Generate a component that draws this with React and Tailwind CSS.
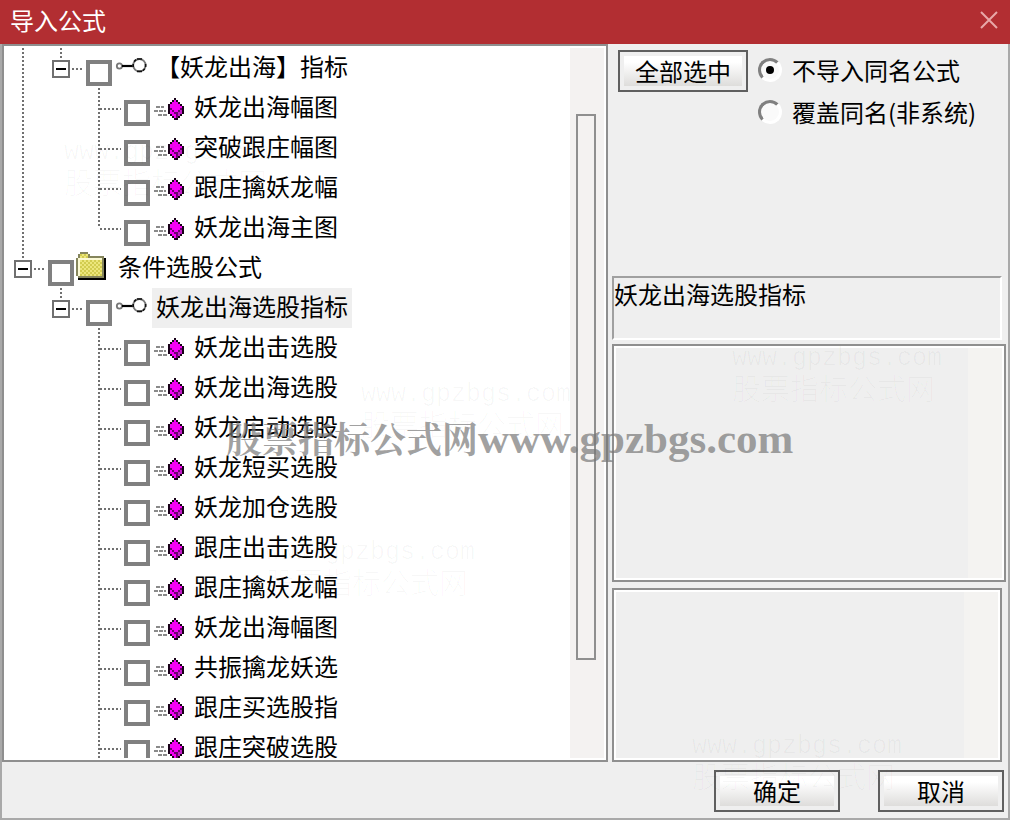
import { useState } from 'react';
import clsx from 'clsx';

const groups = [
  {
    id: 'indicator',
    root: null,
    title: '【妖龙出海】指标',
    items: ['妖龙出海幅图', '突破跟庄幅图', '跟庄擒妖龙幅', '妖龙出海主图'],
  },
  {
    id: 'picker',
    root: '条件选股公式',
    title: '妖龙出海选股指标',
    items: [
      '妖龙出击选股',
      '妖龙出海选股',
      '妖龙启动选股',
      '妖龙短买选股',
      '妖龙加仓选股',
      '跟庄出击选股',
      '跟庄擒妖龙幅',
      '妖龙出海幅图',
      '共振擒龙妖选',
      '跟庄买选股指',
      '跟庄突破选股',
    ],
  },
];

// Dotted guide lines of one tree cell
function Guide({ up, down, right, from = 20 }) {
  return (
    <svg
      width="38"
      height="40"
      className="col-start-1 row-start-1 overflow-visible"
      fill="none"
      stroke="#707070"
      strokeWidth="2"
      strokeDasharray="2 2"
      shapeRendering="crispEdges"
      aria-hidden="true"
    >
      {up && <path d="M19 0V20" />}
      {down && <path d="M19 20V40" />}
      {right && <path d={`M${from} 21H41`} />}
    </svg>
  );
}

function Cell({ children }) {
  return <div className="grid h-10 w-[38px] shrink-0">{children}</div>;
}

function Expander({ open, onClick, label }) {
  return (
    <button
      type="button"
      aria-label={label}
      aria-expanded={open}
      onClick={onClick}
      className="z-10 col-start-1 row-start-1 mt-3 ml-2.5 flex size-[18px] items-center justify-center border-2 border-[#707070] bg-white"
    >
      <svg width="10" height="10" stroke="#000" strokeWidth="2" shapeRendering="crispEdges">
        <path d="M0 5H10" />
        {!open && <path d="M5 0V10" />}
      </svg>
    </button>
  );
}

function FolderIcon() {
  return (
    <svg width="40" height="40" viewBox="0 0 20 20" shapeRendering="crispEdges" aria-hidden="true">
      <defs>
        <pattern id="check" width="2" height="2" patternUnits="userSpaceOnUse">
          <rect width="2" height="2" fill="#ece67c" />
          <rect width="1" height="1" fill="#d2cc50" />
          <rect x="1" y="1" width="1" height="1" fill="#d2cc50" />
        </pattern>
      </defs>
      <path d="M3 14H15V5H16V16H2V15Z" fill="#000" />
      <path d="M1 5H2V3H3V2H7V3H8V4H15V15H2V14H1Z" fill="#85855c" />
      <rect x="3" y="3" width="4" height="2" fill="url(#check)" />
      <path d="M2 5H14V6H3V14H2Z" fill="#fbf9d4" />
      <rect x="3" y="6" width="11" height="8" fill="url(#check)" />
    </svg>
  );
}

function KeyIcon() {
  return (
    <svg width="40" height="40" viewBox="0 0 20 20" fill="none" aria-hidden="true">
      <circle cx="3.7" cy="9" r="1.3" stroke="#777" strokeWidth="0.9" />
      <path d="M5 9H10.5" stroke="#000" strokeWidth="1.1" />
      <circle cx="13.7" cy="8.6" r="3.1" stroke="#777" strokeWidth="0.9" />
      <path
        d="M12.5 5.5H15M12.5 11.7H15M10.6 8V9.5M16.8 8V9.5M11 6.8L12 5.8M16.4 10.4L15.4 11.4"
        stroke="#111"
        strokeWidth="0.8"
      />
    </svg>
  );
}

const gemRows = [
  '...#....',
  '..#M#...',
  '.#MMM#..',
  '#MMMMM#.',
  '#MMMMMM#',
  '#DMMMMD#',
  '#MDMMDP#',
  '#MMDDPP#',
  '.#MMDP#.',
  '..#MD#..',
  '...##...',
];
const gemColors = { '#': '#180018', M: '#f400f4', D: '#6c006c', P: '#c41cc8' };

function GemIcon() {
  return (
    <svg width="40" height="40" viewBox="0 0 20 20" shapeRendering="crispEdges" aria-hidden="true">
      <path
        d="M3 9.5H7M2 11.5H8M4 13.5H9"
        stroke="#8a8a8a"
        strokeWidth="1"
        strokeDasharray="2 0.5"
      />
      {gemRows.map((row, y) =>
        [...row].map((c, x) =>
          c === '.' ? null : (
            <rect key={`${x}-${y}`} x={9 + x} y={5 + y} width="1" height="1" fill={gemColors[c]} />
          )
        )
      )}
    </svg>
  );
}

function Entry({ id, text, icon, selected, checked, onToggle }) {
  return (
    <>
      <input
        id={id}
        type="checkbox"
        checked={checked}
        onChange={onToggle}
        className="mt-3 ml-1.5 size-[26px] shrink-0 appearance-none border-4 border-[#808080] bg-white checked:bg-[#404040]"
      />
      <label htmlFor={id} className="flex">
        {icon}
        <span className={clsx('px-1 whitespace-nowrap', selected && 'bg-[#efefef]')}>{text}</span>
      </label>
    </>
  );
}

function FormulaTree({ checked, toggle }) {
  const [closed, setClosed] = useState({});
  const flip = (key) => setClosed((prev) => ({ ...prev, [key]: !prev[key] }));

  return (
    <ul className="min-w-0 flex-1 overflow-hidden leading-9">
      {groups.map((group, index) => {
        const last = index === groups.length - 1;
        const rootOpen = !closed[group.id];
        const titleOpen = !closed[group.title];
        return (
          <li key={group.id}>
            {group.root && (
              <div className="flex h-10">
                <Cell>
                  <Guide up right from={30} />
                  <Expander open={rootOpen} onClick={() => flip(group.id)} label={group.root} />
                </Cell>
                <Entry
                  id={group.id}
                  text={group.root}
                  icon={<FolderIcon />}
                  checked={!!checked[group.id]}
                  onToggle={() => toggle(group.id)}
                />
              </div>
            )}
            {rootOpen && (
              <div className="flex h-10">
                <Cell>{!last && <Guide up down />}</Cell>
                <Cell>
                  <Guide up right from={30} />
                  <Expander open={titleOpen} onClick={() => flip(group.title)} label={group.title} />
                </Cell>
                <Entry
                  id={group.title}
                  text={group.title}
                  icon={<KeyIcon />}
                  selected={last}
                  checked={!!checked[group.title]}
                  onToggle={() => toggle(group.title)}
                />
              </div>
            )}
            {rootOpen && titleOpen && (
              <ul>
                {group.items.map((item, i) => {
                  const key = `${group.id}-${i}`;
                  return (
                    <li key={key} className="flex h-10">
                      <Cell>{!last && <Guide up down />}</Cell>
                      <Cell />
                      <Cell>
                        <Guide up down={last || i < group.items.length - 1} right />
                      </Cell>
                      <Entry
                        id={key}
                        text={item}
                        icon={<GemIcon />}
                        checked={!!checked[key]}
                        onToggle={() => toggle(key)}
                      />
                    </li>
                  );
                })}
              </ul>
            )}
          </li>
        );
      })}
    </ul>
  );
}

function Button({ children, className, onClick }) {
  return (
    <button
      type="button"
      onClick={onClick}
      className={clsx('h-[42px] border-2 border-[#5f5f5f] bg-[#efefef] p-1', className)}
    >
      <span className="flex h-full items-center justify-center bg-linear-to-b from-white from-20% to-[#dedddb] leading-7">
        {children}
      </span>
    </button>
  );
}

function Radio({ value, current, onChange, children }) {
  return (
    <label className="flex h-[42px] items-start gap-2.5 leading-10 whitespace-nowrap">
      <input
        type="radio"
        name="mode"
        value={value}
        checked={current === value}
        onChange={() => onChange(value)}
        className="mt-2 grid size-6 shrink-0 appearance-none place-items-center rounded-full border-[3px] border-t-[#808080] border-r-white border-b-white border-l-[#808080] bg-[#fafafa] before:size-2 before:rounded-full checked:before:bg-black"
      />
      {children}
    </label>
  );
}

function TextPanel({ label, className }) {
  return (
    <div className={clsx('flex border-2 border-[#8f8f8f] bg-white p-0.5', className)}>
      <textarea readOnly aria-label={label} className="min-w-0 flex-1 resize-none bg-[#efefef] outline-none" />
      <div className="w-[34px] bg-[#f4f3f1]" />
    </div>
  );
}

function Stamp({ className }) {
  return (
    <div
      aria-hidden="true"
      className={clsx(
        'pointer-events-none absolute z-20 font-["Liberation_Mono","Noto_Sans_CJK_SC",monospace] font-light whitespace-nowrap text-black/3',
        className
      )}
    >
      <p className="text-[25px] leading-[34px]">www.gpzbgs.com</p>
      <p className="text-[29px] leading-[34px]">股票指标公式网</p>
    </div>
  );
}

export default function App() {
  const [checked, setChecked] = useState({});
  const [mode, setMode] = useState('skip');

  const toggle = (key) => setChecked((prev) => ({ ...prev, [key]: !prev[key] }));

  const selectAll = () => {
    const next = {};
    groups.forEach((group) => {
      next[group.id] = true;
      next[group.title] = true;
      group.items.forEach((_, i) => {
        next[`${group.id}-${i}`] = true;
      });
    });
    setChecked(next);
  };

  return (
    <div className='relative flex h-screen flex-col overflow-hidden bg-[#efefef] font-["Noto_Sans_CJK_SC",sans-serif] text-2xl text-black'>
      <header className="flex h-11 shrink-0 items-center justify-between bg-[#b22e32] pr-3 pb-1 pl-2.5 text-white">
        <h1>导入公式</h1>
        <button type="button" aria-label="关闭">
          <svg width="18" height="18" stroke="#e8a8a8" strokeWidth="2">
            <path d="M1 1L17 17M17 1L1 17" />
          </svg>
        </button>
      </header>

      <div className="flex min-h-0 flex-1 flex-col border-x-2 border-b-2 border-[#a9a9a9]">
        <main className="flex min-h-0 flex-1 gap-1">
          <section className="flex min-w-0 flex-1 border-2 border-[#8f8f8f] bg-white py-0.5 pr-0.5">
            <FormulaTree checked={checked} toggle={toggle} />
            <div className="flex w-[34px] flex-col bg-[#f4f2f1] pr-2 pl-1.5">
              <div className="flex-[66]" />
              <div className="flex-[542] border-2 border-[#8f8f8f]" />
              <div className="flex-[98]" />
            </div>
          </section>

          <section className="flex w-[396px] shrink-0 flex-col pr-0.5">
            <div className="flex h-[232px] shrink-0 items-start gap-2.5 pt-1.5 pl-1.5">
              <Button className="w-[130px] shrink-0" onClick={selectAll}>全部选中</Button>
              <fieldset>
                <Radio value="skip" current={mode} onChange={setMode}>不导入同名公式</Radio>
                <Radio value="overwrite" current={mode} onChange={setMode}>覆盖同名(非系统)</Radio>
              </fieldset>
            </div>
            <p className="mr-1 h-16 shrink-0 border-2 border-t-[#a0a0a0] border-r-white border-b-white border-l-[#a0a0a0] leading-8">
              妖龙出海选股指标
            </p>
            <TextPanel label="公式说明" className="mt-1 flex-[230]" />
            <TextPanel label="导入结果" className="mt-1.5 mr-1 flex-[166]" />
          </section>
        </main>

        <footer className="flex h-14 shrink-0 justify-end gap-[38px] pt-2 pr-1">
          <Button className="w-[126px]">确定</Button>
          <Button className="w-[126px]">取消</Button>
        </footer>
      </div>

      <Stamp className="top-[136px] left-16" />
      <Stamp className="top-[378px] left-[361px]" />
      <Stamp className="top-[536px] left-[265px]" />
      <Stamp className="top-[342px] left-[732px]" />
      <Stamp className="top-[730px] left-[692px]" />
      <p
        aria-hidden="true"
        className='pointer-events-none absolute top-[414px] left-[226px] z-20 flex items-baseline font-["Noto_Serif_CJK_SC","Liberation_Serif","Noto_Sans_CJK_SC",serif] leading-[48px] font-bold whitespace-nowrap text-[#777777]/70'
      >
        <span className="text-4xl leading-[48px]">股票指标公式网</span>
        <span className='font-["Liberation_Serif",serif] text-[43px] leading-[48px]'>www.gpzbgs.com</span>
      </p>
    </div>
  );
}
